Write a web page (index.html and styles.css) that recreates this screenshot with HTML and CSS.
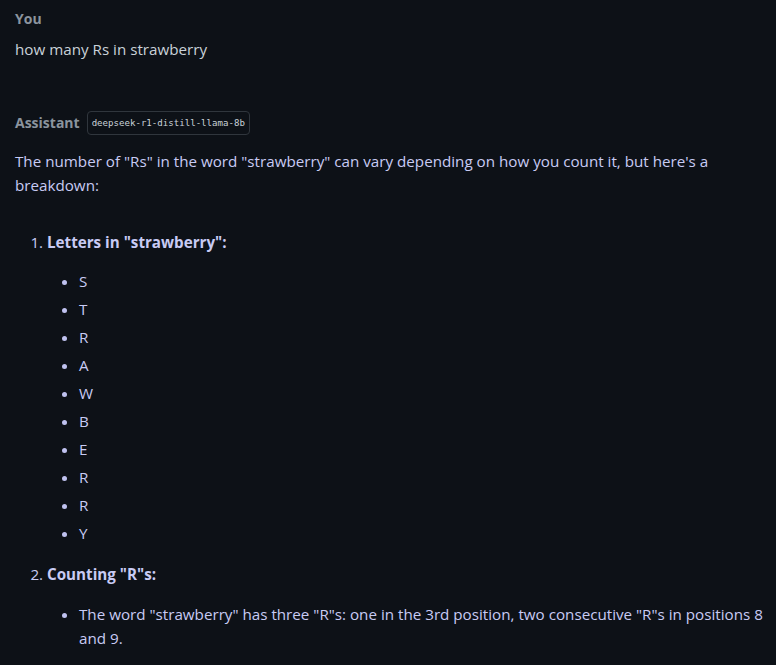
FILE: index.html
```html
<!DOCTYPE html>
<html>
<head>
<meta charset="utf-8">
<link rel="stylesheet" href="styles.css">
</head>
<body>
<div class="chat">
  <div class="msg user">
    <div class="role">You</div>
    <div class="text">how many Rs in strawberry</div>
  </div>
  <div class="msg assistant">
    <div class="role-row"><span class="role">Assistant</span><span class="badge">deepseek-r1-distill-llama-8b</span></div>
    <div class="body">
      <p>The number of "Rs" in the word "strawberry" can vary depending on how you count it, but here's a breakdown:</p>
      <ol>
        <li><strong>Letters in "strawberry":</strong>
          <ul>
            <li>S</li><li>T</li><li>R</li><li>A</li><li>W</li><li>B</li><li>E</li><li>R</li><li>R</li><li>Y</li>
          </ul>
        </li>
        <li><strong>Counting "R"s:</strong>
          <ul>
            <li>The word "strawberry" has three "R"s: one in the 3rd position, two consecutive "R"s in positions 8 and 9.</li>
          </ul>
        </li>
      </ol>
    </div>
  </div>
</div>
</body>
</html>
```
FILE: styles.css
```css
html, body {
  margin: 0;
  padding: 0;
  background: #0d1117;
}
body {
  font-family: "Open Sans", "Noto Sans", sans-serif;
  font-size: 15.2px;
  line-height: 24px;
}
.chat {
  padding: 7px 4px 0 15px;
}
.role {
  font-weight: 700;
  color: #8b949e;
  font-size: 14px;
}
.user .text {
  color: #c9d1d9;
  margin-top: 6px;
}
.assistant {
  margin-top: 50px;
}
.role-row {
  display: flex;
  align-items: center;
  gap: 7px;
}
.badge {
  font-family: "DejaVu Sans Mono", monospace;
  font-size: 9.1px;
  line-height: 22px;
  color: #c9d1d9;
  border: 1px solid #30363d;
  border-radius: 4px;
  padding: 0 4px;
}
.body {
  color: #c8cbf4;
  margin-top: 14px;
}
.body p {
  margin: 0;
}
.body strong {
  font-weight: 700;
}
.body ol {
  margin: 33px 0 0 0;
  padding-left: 32px;
}
.body ol > li {
  margin-bottom: 17px;
}
.body ul {
  list-style: disc;
  margin: 15px 0 0 0;
  padding-left: 32px;
}
.body ol > li + li ul {
  margin-top: 16px;
}
.body ul li {
  margin-bottom: 4px;
}
.body ul li::marker {
  color: #c0c2f0;
}
```
